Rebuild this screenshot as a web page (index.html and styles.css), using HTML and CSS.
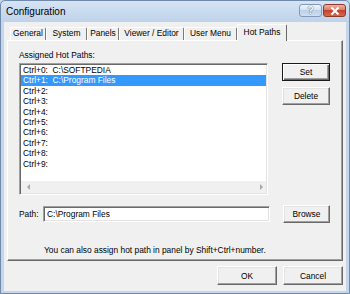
FILE: index.html
```html
<!DOCTYPE html>
<html>
<head>
<meta charset="utf-8">
<link rel="stylesheet" href="styles.css">
</head>
<body>
<div class="window">
  <div class="titlebar">
    <span class="title">Configuration</span>
    <div class="caption-btns">
      <span class="cbtn help">?</span>
      <span class="cbtn close"><svg width="10" height="8" viewBox="0 0 10 8"><path d="M1.5 0.5 L8.5 7.5 M8.5 0.5 L1.5 7.5" stroke="#fff" stroke-width="2"/></svg></span>
    </div>
  </div>
  <div class="client">
    <div class="tabs">
      <div class="tab w-general">General</div>
      <div class="tab w-system">System</div>
      <div class="tab w-panels">Panels</div>
      <div class="tab w-viewer">Viewer / Editor</div>
      <div class="tab w-user">User Menu</div>
      <div class="tab active w-hot">Hot Paths</div>
    </div>
    <div class="panel">
      <div class="label">Assigned Hot Paths:</div>
      <div class="list-row">
        <div class="listbox">
          <div class="items">
            <div class="item">Ctrl+0:  C:\SOFTPEDIA</div>
            <div class="item sel">Ctrl+1:  C:\Program Files</div>
            <div class="item">Ctrl+2:</div>
            <div class="item">Ctrl+3:</div>
            <div class="item">Ctrl+4:</div>
            <div class="item">Ctrl+5:</div>
            <div class="item">Ctrl+6:</div>
            <div class="item">Ctrl+7:</div>
            <div class="item">Ctrl+8:</div>
            <div class="item">Ctrl+9:</div>
          </div>
          <div class="hscroll"><span class="arr left"></span><span class="arr right"></span></div>
        </div>
        <div class="side-btns">
          <button class="btn default">Set</button>
          <button class="btn">Delete</button>
        </div>
      </div>
      <div class="path-row">
        <span class="path-label">Path:</span>
        <div class="input">C:\Program Files</div>
        <button class="btn browse">Browse</button>
      </div>
      <div class="hint">You can also assign hot path in panel by Shift+Ctrl+number.</div>
    </div>
    <div class="footer">
      <button class="btn dlg">OK</button>
      <button class="btn dlg">Cancel</button>
    </div>
  </div>
</div>
</body>
</html>
```

FILE: styles.css
```css
html, body {
  margin: 0;
  padding: 0;
}
body {
  width: 350px;
  height: 294px;
  overflow: hidden;
  background: #c4d6ec;
  font-family: "Liberation Sans", Arial, sans-serif;
  font-size: 8.4px;
  color: #000;
}
.window {
  width: 350px;
  height: 294px;
  box-sizing: border-box;
  border: 1px solid #6f8aab;
  border-radius: 5px 5px 0 0;
  background: linear-gradient(#d6e4f4, #bed2ea 21px, #c4d6ec 21px);
  display: flex;
  flex-direction: column;
}
.titlebar {
  height: 21px;
  flex: none;
  display: flex;
  justify-content: space-between;
  align-items: center;
  padding: 0 3px 0 5px;
}
.title {
  font-size: 10px;
  color: #000;
}
.caption-btns {
  display: flex;
  gap: 1px;
  align-self: flex-start;
  margin-top: 3px;
}
.cbtn {
  width: 23px;
  height: 13px;
  box-sizing: border-box;
  border-radius: 3px;
  display: flex;
  align-items: center;
  justify-content: center;
}
.help {
  border: 1px solid #8199bb;
  background: linear-gradient(#eef4fb, #d3e1f2 50%, #bcd0ea 50%, #cfdff2);
  color: #fff;
  font-weight: bold;
  font-size: 10px;
  text-shadow: 0 0 1px #4a5f7e, 0 0 1px #4a5f7e;
}
.close {
  border: 1px solid #8c3a2a;
  background: linear-gradient(#eeb3a3, #d87560 50%, #c6432b 50%, #d5694f);
}
.close svg {
  display: block;
}
.client {
  flex: 1;
  margin: 0 3px 2px;
  background: #f0f0f0;
  padding: 2px 3px 0;
  display: flex;
  flex-direction: column;
}
.tabs {
  height: 16px;
  flex: none;
  display: flex;
  align-items: flex-end;
  padding-left: 3px;
  position: relative;
  z-index: 1;
}
.tab {
  box-sizing: border-box;
  height: 13px;
  border-top: 1px solid #fff;
  border-left: 1px solid #fff;
  border-right: 1px solid #7a7a7a;
  border-radius: 2px 2px 0 0;
  background: #f0f0f0;
  text-align: center;
  line-height: 11px;
  white-space: nowrap;
}
.tab.active {
  height: 17px;
  margin-bottom: -1px;
  line-height: 14px;
  border-right-color: #696969;
}
.w-general { width: 36px; }
.w-system { width: 41px; }
.w-panels { width: 32px; }
.w-viewer { width: 65px; }
.w-user { width: 53px; }
.w-hot { width: 50px; }
.panel {
  height: 221px;
  flex: none;
  box-sizing: border-box;
  border: 1px solid;
  border-color: #fff #696969 #696969 #fff;
  box-shadow: inset -1px -1px 0 #a0a0a0;
  padding: 9px 0 0 11px;
}
.label {
  line-height: 10px;
  height: 10px;
}
.list-row {
  display: flex;
  align-items: flex-start;
  gap: 14px;
  margin-top: 3px;
}
.listbox {
  width: 249px;
  height: 132px;
  box-sizing: border-box;
  border: 1px solid;
  border-color: #a0a0a0 #fff #fff #a0a0a0;
  box-shadow: inset 1px 1px 0 #696969, inset -1px -1px 0 #e3e3e3;
  padding: 1px;
  background: #fff;
  display: flex;
  flex-direction: column;
}
.items {
  flex: 1;
}
.item {
  height: 10.4px;
  line-height: 10.4px;
  padding-left: 2px;
  white-space: pre;
}
.item.sel {
  background: #3399ff;
  color: #fff;
}
.hscroll {
  height: 12px;
  flex: none;
  background: #f0f0f0;
  display: flex;
  align-items: center;
  justify-content: space-between;
  padding: 0 3px 0 6px;
}
.arr {
  width: 0;
  height: 0;
  border-top: 3px solid transparent;
  border-bottom: 3px solid transparent;
}
.arr.left {
  border-right: 3px solid #a8a8a8;
}
.arr.right {
  border-left: 3px solid #a8a8a8;
}
.side-btns {
  display: flex;
  flex-direction: column;
  gap: 6px;
}
.btn {
  box-sizing: border-box;
  margin: 0;
  padding: 0;
  font: inherit;
  color: #000;
  background: #f0f0f0;
  border: 1px solid;
  border-color: #fff #696969 #696969 #fff;
  box-shadow: inset -1px -1px 0 #a0a0a0, inset 1px 1px 0 #e3e3e3;
  text-align: center;
}
.side-btns .btn {
  width: 48px;
  height: 18px;
}
.btn.default {
  border-color: #1a1a1a;
  box-shadow: inset 1px 1px 0 #fff, inset -1px -1px 0 #696969, inset -2px -2px 0 #a0a0a0;
}
.path-row {
  display: flex;
  align-items: center;
  height: 18px;
  margin-top: 10px;
}
.path-label {
  width: 24px;
}
.input {
  width: 227px;
  height: 16px;
  box-sizing: border-box;
  border: 1px solid;
  border-color: #a0a0a0 #fff #fff #a0a0a0;
  box-shadow: inset 1px 1px 0 #696969, inset -1px -1px 0 #e3e3e3;
  background: #fff;
  padding: 0 3px;
  line-height: 14px;
  white-space: nowrap;
}
.btn.browse {
  margin-left: 13px;
  width: 47px;
  height: 18px;
}
.hint {
  margin-top: 22px;
  padding-left: 25px;
  line-height: 10px;
}
.footer {
  display: flex;
  justify-content: flex-end;
  gap: 6px;
  margin-top: 5px;
}
.btn.dlg {
  width: 60px;
  height: 19px;
}
```
